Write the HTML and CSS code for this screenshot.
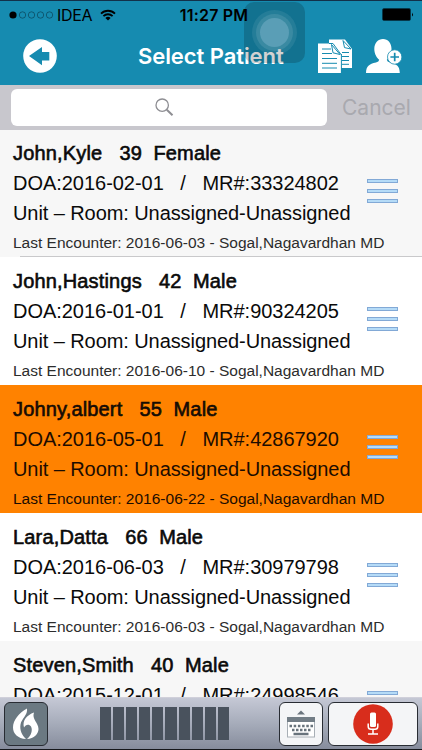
FILE: index.html
```html
<!DOCTYPE html>
<html lang="en">

<head>
  <meta charset="UTF-8" />
  <meta name="viewport" content="width=device-width, initial-scale=1.0" />
  <title>Select Patient</title>
  <link rel="stylesheet" href="styles.css">
</head>

<body>
  <header class="top">
    <div class="status">
      <div class="status-left">
        <svg class="signal" width="45" height="8" viewBox="0 0 45 8">
          <circle cx="4" cy="4" r="3.6" />
          <g fill="none" stroke="#0b4357" stroke-width="0.7">
            <circle cx="13.5" cy="4" r="3.2" />
            <circle cx="22.5" cy="4" r="3.2" />
            <circle cx="31.5" cy="4" r="3.2" />
            <circle cx="40.5" cy="4" r="3.2" />
          </g>
        </svg>
        <span class="carrier">IDEA</span>
        <svg class="wifi" width="16" height="12" viewBox="0 0 16 12">
          <path d="M1 4.6A10 10 0 0 1 15 4.6M3.4 7.1A6.6 6.6 0 0 1 12.6 7.1" fill="none" stroke="#000" stroke-width="1.8" />
          <path d="M8 11.6L5.4 9A3.7 3.7 0 0 1 10.6 9Z" />
        </svg>
      </div>
      <span class="clock">11:27 PM</span>
      <svg class="battery" width="32" height="13" viewBox="0 0 32 13">
        <rect x="0.5" y="0.5" width="28" height="12" rx="1.5" fill="none" stroke="#06384a" />
        <rect x="1" y="1" width="27" height="11" rx="0.5" />
        <path d="M30 4.5Q31.8 6.5 30 8.5Z" />
      </svg>
    </div>

    <div class="navbar">
      <button class="icon-btn back" aria-label="Back">
        <svg width="34" height="34" viewBox="0 0 34 34">
          <circle cx="17" cy="17" r="16.8" fill="#fff" />
          <path d="M6 17L19 8V13H26.3V21.6H19V26.3Z" fill="#168bb0" />
        </svg>
      </button>
      <h1>Select Patient</h1>
      <button class="icon-btn notes" aria-label="Notes">
        <svg width="35" height="34" viewBox="0 0 35 34">
          <path d="M11 0.5H27L34 10V29H11Z" fill="#fff" />
          <path d="M25 1.5L33 10L26.5 8.6Z" fill="#fff" stroke="#168bb0" />
          <path d="M24 13.5H31M24 17.5H31M24 21.5H31M24 25.3H31" stroke="#168bb0" />
          <path d="M0 4.5H15L23 15.5V34H0Z" fill="#fff" />
          <path d="M23.4 15V34M11 4.5H15L23 15.5" stroke="#168bb0" fill="none" />
          <path d="M13.5 5.5L22 15.5L15 13.8Z" fill="#fff" stroke="#168bb0" />
          <path d="M4 10H13M4 14.5H14M4 19.5H19M4 24.3H19M4 29H19" stroke="#168bb0" />
        </svg>
      </button>
      <button class="icon-btn add" aria-label="Add patient">
        <svg width="36" height="35" viewBox="0 0 36 35">
          <path d="M17 0C22 0 25.5 4 25.5 10C25.5 15 23 19 20.8 20.8Q21 22.8 24 23.5C31 25 33.5 27 33.8 34H0C0.3 27 3 25 10 23.5Q13 22.8 13.2 20.8C11 19 8.3 15 8.3 10C8.3 4 12 0 17 0Z" fill="#fff" />
          <circle cx="28.7" cy="18" r="7.2" fill="#fff" stroke="#168bb0" stroke-width="0.8" />
          <path d="M28.7 13.7V22.3M24.4 18H33" stroke="#168bb0" stroke-width="1.7" />
        </svg>
      </button>
    </div>

    <div class="assistive"><span></span></div>
  </header>

  <div class="search">
    <div class="search-box">
      <svg width="19" height="19" viewBox="0 0 19 19" fill="none" stroke="#8e8e93">
        <circle cx="7.2" cy="7.2" r="6.2" stroke-width="1.3" />
        <path d="M11.8 11.8L17.5 17.3" stroke-width="2" />
      </svg>
    </div>
    <span class="cancel">Cancel</span>
  </div>

  <main class="patients">
    <article class="patient shade">
      <div class="info">
        <p class="name">John,Kyle   39  Female</p>
        <p>DOA:2016-02-01   /   MR#:33324802</p>
        <p class="unit">Unit – Room: Unassigned-Unassigned</p>
        <p class="last">Last Encounter: 2016-06-03 - Sogal,Nagavardhan MD</p>
      </div>
      <div class="menu"><i></i><i></i><i></i></div>
    </article>
    <article class="patient">
      <div class="info">
        <p class="name">John,Hastings   42  Male</p>
        <p>DOA:2016-01-01   /   MR#:90324205</p>
        <p class="unit">Unit – Room: Unassigned-Unassigned</p>
        <p class="last">Last Encounter: 2016-06-10 - Sogal,Nagavardhan MD</p>
      </div>
      <div class="menu"><i></i><i></i><i></i></div>
    </article>
    <article class="patient selected">
      <div class="info">
        <p class="name">Johny,albert   55  Male</p>
        <p>DOA:2016-05-01   /   MR#:42867920</p>
        <p class="unit">Unit – Room: Unassigned-Unassigned</p>
        <p class="last">Last Encounter: 2016-06-22 - Sogal,Nagavardhan MD</p>
      </div>
      <div class="menu"><i></i><i></i><i></i></div>
    </article>
    <article class="patient">
      <div class="info">
        <p class="name">Lara,Datta   66  Male</p>
        <p>DOA:2016-06-03   /   MR#:30979798</p>
        <p class="unit">Unit – Room: Unassigned-Unassigned</p>
        <p class="last">Last Encounter: 2016-06-03 - Sogal,Nagavardhan MD</p>
      </div>
      <div class="menu"><i></i><i></i><i></i></div>
    </article>
    <article class="patient shade">
      <div class="info">
        <p class="name">Steven,Smith   40  Male</p>
        <p>DOA:2015-12-01   /   MR#:24998546</p>
      </div>
      <div class="menu"><i></i><i></i><i></i></div>
    </article>
  </main>

  <footer class="speech">
    <button class="key flame" aria-label="Dragon">
      <svg width="26" height="32" viewBox="0 0 26 32" fill="#fff">
        <path d="M14 0.5C6 5 0 12 0 19.500C0 26 5 30.500 13 31C9 27.500 6.500 22 7.500 16.500C8.500 10.500 15 7 14 0.500Z" />
        <path d="M21 4.500C14 7 9 12.500 11 19.500C12.500 16.500 16 15.500 18 18.500C20 22 18 28 14 31C21 30.500 25.500 26 25.500 21C25.500 14.500 18.500 11.500 21 4.500Z" />
      </svg>
    </button>
    <div class="meter"><i></i><i></i><i></i><i></i><i></i><i></i><i></i><i></i><i></i><i></i></div>
    <button class="key keyboard" aria-label="Keyboard">
      <svg width="28" height="28" viewBox="0 0 28 28">
        <path d="M10 4.500L14 0.500L18 4.500Z" fill="#6a747d" />
        <rect x="0.500" y="7.500" width="27" height="19.500" fill="#fff" stroke="#a8afb6" />
        <rect x="0" y="7" width="28" height="5" fill="#727d86" />
        <path d="M2.500 16H26" stroke="#68737c" stroke-width="2.500" stroke-dasharray="2.500 1.700" />
        <path d="M5 20H24" stroke="#68737c" stroke-width="2.500" stroke-dasharray="2.500 1.500" />
        <path d="M6.500 24H21.500" stroke="#68737c" stroke-width="2.500" />
      </svg>
    </button>
    <button class="key record" aria-label="Record">
      <svg width="40" height="40" viewBox="0 0 40 40">
        <circle cx="20" cy="20" r="19.800" fill="#d82d1c" />
        <rect x="17" y="8.500" width="6" height="14.500" rx="1.500" fill="#fff" />
        <path d="M15.200 19.500V22.500Q15.200 25.300 18 25.300H22Q24.800 25.300 24.800 22.500V19.500M20 25V30M15 30H25" fill="none" stroke="#fff" stroke-width="1.500" />
      </svg>
    </button>
  </footer>
</body>

</html>
```
FILE: styles.css
```css
* {
  box-sizing: border-box;
}

body {
  margin: 0;
  height: 750px;
  display: flex;
  flex-direction: column;
  overflow: hidden;
  background: #fff;
  font-family: "Liberation Sans", Arial, sans-serif;
  color: #0a0a0a;
}

button {
  padding: 0;
  border: none;
  background: none;
}

svg {
  display: block;
}

.top {
  position: relative;
  flex: none;
  height: 85px;
  background: #168bb0;
  border-top: 1px solid #12314a;
  font-family: Inter, sans-serif;
}

.status {
  display: grid;
  grid-template-columns: 1fr auto 1fr;
  align-items: center;
  height: 27px;
  padding: 0 8px 0 9px;
  color: #000;
}

.status-left {
  display: flex;
  align-items: center;
}

.carrier {
  margin-left: 3px;
  width: 38px;
  font-size: 16px;
  letter-spacing: -0.3px;
}

.wifi {
  margin-left: 5px;
}

.clock {
  margin-left: 5px;
  font-size: 16px;
  font-weight: 600;
  letter-spacing: 0.2px;
  white-space: nowrap;
}

.battery {
  justify-self: end;
}

.navbar {
  display: flex;
  height: 57px;
  padding: 0 21px 0 23px;
}

.back {
  width: 34px;
  height: 34px;
  margin-top: 11px;
}

.navbar h1 {
  width: 146px;
  margin: 13px 0 0 81px;
  font-size: 22px;
  line-height: 30px;
  font-weight: 600;
  letter-spacing: -0.07px;
  color: #fff;
  white-space: nowrap;
}

.notes {
  margin: 11px 0 0 34px;
  height: 34px;
}

.add {
  margin: 11px 0 0 13px;
  height: 35px;
}

/* floating touch button, sits over the header */
.assistive {
  position: absolute;
  left: 244px;
  top: 1px;
  width: 61px;
  height: 61px;
  border-radius: 10px;
  background: rgba(0, 0, 0, 0.18);
  display: flex;
  align-items: center;
  justify-content: center;
}

.assistive span {
  width: 29px;
  height: 29px;
  border-radius: 50%;
  background: #5a9eb6;
  box-shadow: 0 0 0 4px rgba(255, 255, 255, 0.1), 0 0 0 8px rgba(255, 255, 255, 0.08);
}

.search {
  display: flex;
  flex: none;
  align-items: center;
  height: 45px;
  padding: 0 11px 1px;
  background: #c8c7cd;
}

.search-box {
  display: flex;
  align-items: center;
  justify-content: center;
  width: 316px;
  height: 37px;
  padding-right: 10px;
  border-radius: 6px;
  background: #fff;
}

.cancel {
  margin-left: 15px;
  font-family: Inter, sans-serif;
  font-size: 21px;
  letter-spacing: 0;
  color: #a9a9af;
}

.patients {
  flex: 1;
  min-height: 0;
  overflow: hidden;
}

.patient {
  display: flex;
  position: relative;
  height: 128px;
  padding: 9px 0 0 13px;
  background: #fff;
}

.patient:first-child {
  height: 128px;
}

.patient.shade {
  background: #f7f7f7;
}

.patient.selected {
  background: #ff8200;
}

.patient.shade::after {
  content: "";
  position: absolute;
  left: 20px;
  right: 0;
  bottom: 0;
  height: 1px;
  background: #c9c9cb;
}

.info {
  width: 354px;
}

.info p {
  margin: 0;
  font-size: 20px;
  line-height: 30px;
  letter-spacing: -0.03px;
  white-space: pre;
}

.info .unit {
  letter-spacing: -0.08px;
}

.info .name {
  letter-spacing: 0.16px;
  -webkit-text-stroke: 0.6px #0a0a0a;
}

.info .last {
  font-size: 15.5px;
  letter-spacing: 0;
  color: #2c2c2c;
}

.selected p,
.selected .name,
.selected .last {
  color: #1c0c00;
}

.menu {
  display: flex;
  flex-direction: column;
  gap: 6px;
  margin-top: 41px;
}

.menu i {
  width: 31px;
  height: 4px;
  background: #b5dbf7;
  border: 1px solid #82a9d6;
}

/* rows start 1px under the search bar */
.patients .patient:first-child {
  margin-top: -1px;
}

.speech {
  display: flex;
  flex: none;
  height: 53px;
  padding: 4px 4px 0;
  background: linear-gradient(#c5c8d5, #a6acba 50%, #868c9c);
  border-top: 1px solid #d0d0da;
  border-bottom: 1px solid #15171b;
}

.key {
  display: flex;
  align-items: center;
  justify-content: center;
  height: 44px;
  border: 1px solid #282c33;
  border-radius: 6px;
  background: #f4f5f7;
}

.flame {
  width: 44px;
  background: #6b7982;
}

.meter {
  display: flex;
  gap: 2px;
  margin: 5px 0 0 52px;
}

.meter i {
  width: 11.1px;
  height: 33px;
  background: #49525d;
}

.keyboard {
  width: 44px;
  margin-left: 50px;
}

.record {
  width: 90px;
  margin-left: 5px;
}
```
